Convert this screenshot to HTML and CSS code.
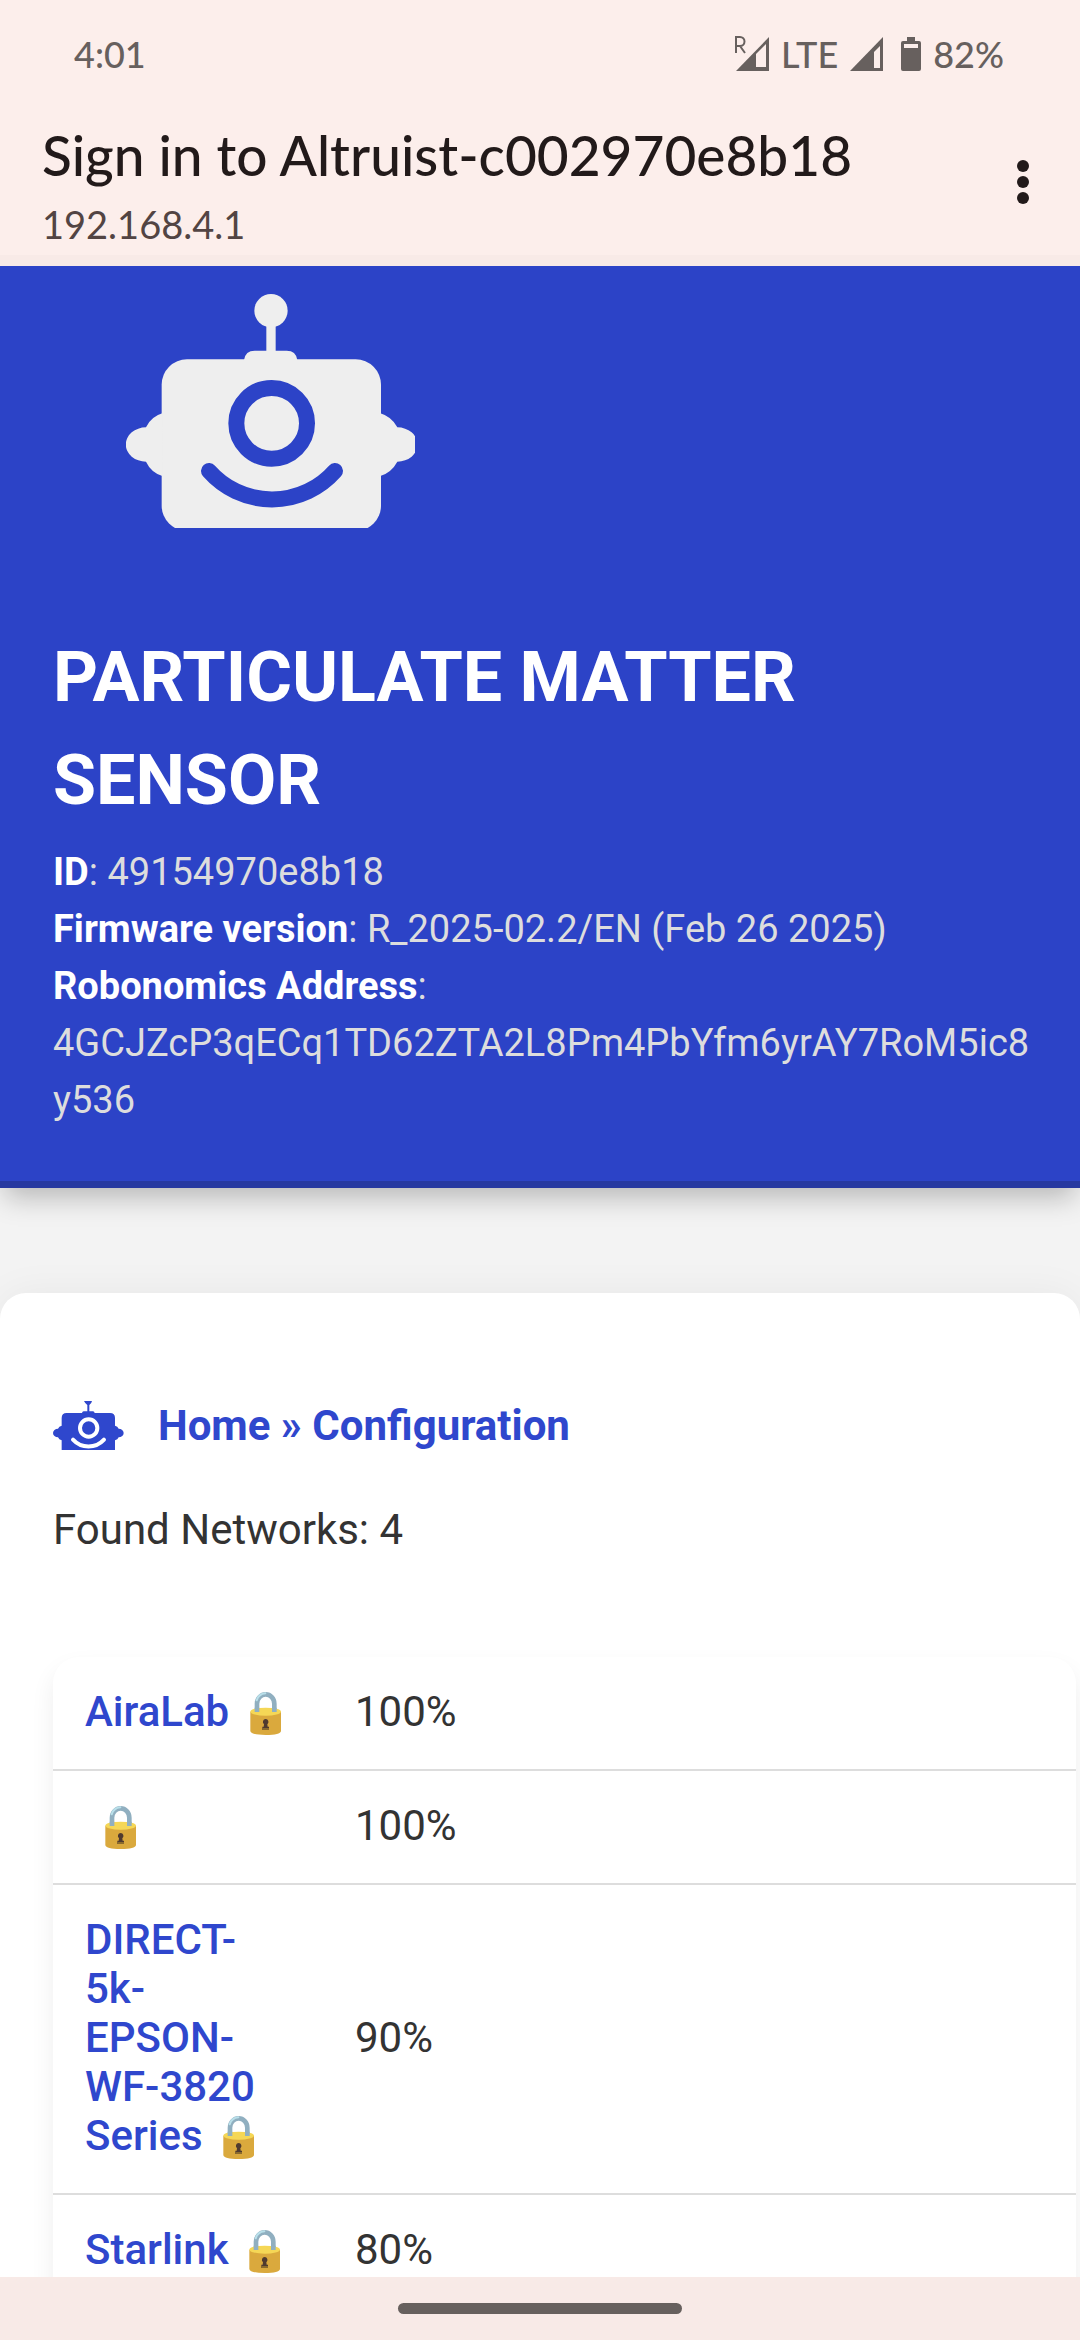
FILE: index.html
```html
<!DOCTYPE html>
<html lang="en">
<head>
<meta charset="utf-8">
<meta name="viewport" content="width=device-width, initial-scale=1">
<title>Sign in to Altruist-c002970e8b18</title>
<link rel="stylesheet" href="styles.css">
</head>
<body>
<svg class="defs" aria-hidden="true">
  <symbol id="lock" viewBox="0 0 93 132">
    <path d="M21 62V38a26 28 0 0 1 52 0v24" fill="none" stroke="#90afc0" stroke-width="14"/>
    <path d="M20 28Q26 9 46 7" fill="none" stroke="#b9e0ea" stroke-width="6" stroke-linecap="round"/>
    <path d="M1 62v58q2 12 46 12t46-12V62z" fill="#daa93d"/>
    <ellipse cx="47" cy="62" rx="46" ry="12" fill="#f5d756"/>
    <path d="M14 50h14v13H14zM66 50h14v13H66z" fill="#90afc0"/>
    <path d="M47 84a9 9 0 0 1 5 16l1 7h4v10H37v-10h4l1-7a9 9 0 0 1 5-16z" fill="#4f3a2f"/>
    <path d="M37 111h20v6H37z" fill="#8a6a2c"/>
  </symbol>
</svg>

<header class="system">
  <div class="status">
    <span class="clock">4:01</span>
    <div class="indicators">
      <svg class="roaming" viewBox="0 0 34 36" aria-hidden="true">
        <path d="M1 35 34 1v34z" fill="#67605e"/><path d="M21 18 31 8v23H21z" fill="#fceeeb"/>
        <path d="M0 0h14v19H0z" fill="#fceeeb"/>
        <path d="M1 17V1h4a4 4 0 0 1 0 9H1M5 10l5 7" fill="none" stroke="#67605e" stroke-width="2"/>
      </svg>
      <span class="network">LTE</span>
      <svg class="signal" viewBox="0 0 33 34" aria-hidden="true">
        <path d="M0 34 33 0v34z" fill="#67605e"/><path d="M24 15 30 9v22h-6z" fill="#fceeeb"/>
      </svg>
      <svg class="battery" viewBox="0 0 20 34" aria-hidden="true">
        <path d="M6 0h8v4h4q2 0 2 2v26q0 2-2 2H2q-2 0-2-2V6q0-2 2-2h4z" fill="#67605e"/><path d="M3 7h14v4H3z" fill="#fceeeb"/>
      </svg>
      <span>82%</span>
    </div>
  </div>
  <div class="toolbar">
    <div class="heading">
      <div class="title">Sign in to Altruist-c002970e8b18</div>
      <div class="host">192.168.4.1</div>
    </div>
    <button class="more" aria-label="More options">
      <svg viewBox="0 0 12 44" aria-hidden="true"><g fill="#221a1a"><circle cx="6" cy="6" r="6"/><circle cx="6" cy="22" r="6"/><circle cx="6" cy="38" r="6"/></g></svg>
    </button>
  </div>
</header>

<div class="page">
  <section class="banner">
    <svg class="robot" viewBox="78 72 867 702" aria-label="Robonomics">
      <g fill="#eee">
        <circle cx="513" cy="122" r="50"/>
        <path d="M499 160h28v90h-28zM432 270q4-28 32-28h96q28 0 32 28z"/>
        <rect x="185" y="268" width="658" height="515" rx="76"/>
        <path d="M187 430Q153 440 138 472A60 51 0 0 0 138 575Q153 607 187 618zM841 430Q875 440 892 472A60 51 0 0 1 892 575Q875 607 841 618z"/>
      </g>
      <g fill="none" stroke="#2c43c7" stroke-width="48" stroke-linecap="round">
        <circle cx="515" cy="460" r="106"/>
        <path d="M327 603A252 252 0 0 0 705 603"/>
      </g>
    </svg>
    <h1>PARTICULATE MATTER SENSOR</h1>
    <p class="info"><b>ID</b>: 49154970e8b18<br>
      <b>Firmware version</b>: R_2025-02.2/EN (Feb 26 2025)<br>
      <b>Robonomics Address</b>:<br>
      <span class="address">4GCJZcP3qECq1TD62ZTA2L8Pm4PbYfm6yrAY7RoM5ic8y536</span></p>
  </section>

  <main class="card">
    <nav class="crumbs">
      <svg class="robot-small" viewBox="159 726 213 147" aria-hidden="true">
        <path d="M252 726h24q-1 7-8 12v19h11q4 1 5 5h46q15 0 15 15v23q8 2 11 9a15 13 0 0 1 0 26q-3 7-11 9v29H185v-29q-8-2-11-9a15 13 0 0 1 0-26q3-7 11-9v-23q0-15 15-15h46q1-4 5-5h11v-19q-7-5-10-12z" fill="#2f47cd"/>
        <g fill="none" stroke="#fff" stroke-width="12" stroke-linecap="round">
          <circle cx="266" cy="807" r="26"/>
          <path d="M219 842A63 63 0 0 0 312 842"/>
        </g>
      </svg>
      <a href="#">Home » Configuration</a>
    </nav>
    <p class="found">Found Networks: 4</p>
    <table class="networks">
      <tr><td class="name"><a href="#">AiraLab</a>&nbsp;<svg class="lock"><use href="#lock"/></svg></td><td>100%</td></tr>
      <tr><td class="name">&nbsp;<svg class="lock"><use href="#lock"/></svg></td><td>100%</td></tr>
      <tr><td class="name"><a href="#">DIRECT-5k-EPSON-WF-3820 Series</a>&nbsp;<svg class="lock"><use href="#lock"/></svg></td><td>90%</td></tr>
      <tr><td class="name"><a href="#">Starlink</a>&nbsp;<svg class="lock"><use href="#lock"/></svg></td><td>80%</td></tr>
    </table>
  </main>
</div>

<footer class="gesture"><div class="handle"></div></footer>
</body>
</html>
```

FILE: styles.css
```css
* { box-sizing: border-box; }

body {
  margin: 0;
  height: 100vh;
  display: flex;
  flex-direction: column;
  overflow: hidden;
  background: #f3f3f3;
  color: #333;
  font: 42px/49px Roboto, sans-serif;
}

.defs {
  display: none;
}

.system {
  flex: none;
  background: #fceeeb;
  border-bottom: 11px solid #f8eae7;
  font-family: "Lato Medium", Lato, sans-serif;
}

.status {
  height: 108px;
  padding: 0 76px 0 74px;
  display: flex;
  align-items: center;
  justify-content: space-between;
  color: #67605e;
  font-size: 36px;
  font-weight: 500;
}

.indicators {
  display: flex;
  align-items: center;
  gap: 12px;
}

.roaming { width: 34px; height: 36px; }
.signal { width: 33px; height: 34px; }
.battery { width: 20px; height: 34px; margin-left: 6px; }

.toolbar {
  height: 147px;
  padding: 0 51px 0 42px;
  display: flex;
  justify-content: space-between;
}

.title {
  margin-top: 12px;
  color: #221a1a;
  font-size: 55px;
  font-weight: 500;
  line-height: 70px;
}

.host {
  color: #524443;
  font-family: Lato, sans-serif;
  font-size: 38px;
  line-height: 68px;
}

.more {
  padding: 0;
  border: 0;
  background: none;
  height: 147px;
}

.more svg {
  display: block;
  width: 12px;
  height: 44px;
}

.page {
  flex: 1;
  min-height: 0;
  overflow: hidden;
}

.banner {
  padding: 28px 48px 52px 53px;
  background: #2c43c7;
  border-bottom: 7px solid #2638a0;
  box-shadow: 0 14px 26px -5px rgba(0, 0, 0, .25);
  color: #ddd;
}

.robot {
  display: block;
  width: 289px;
  height: 234px;
  margin-left: 73px;
}

h1 {
  margin: 98px 0 12px;
  color: #fff;
  font-size: 70px;
  line-height: 103px;
  font-weight: 700;
}

.info {
  margin: 0;
  font-size: 38px;
  line-height: 57px;
}

.info b {
  color: #fff;
}

.address {
  word-break: break-all;
}

.card {
  margin-top: 105px;
  padding: 108px 4px 60px 53px;
  background: #fff;
  border-radius: 26px;
  box-shadow: 0 0 40px rgba(0, 0, 0, .05);
}

.crumbs {
  display: flex;
  align-items: center;
  gap: 34px;
  font-weight: 700;
}

.robot-small {
  width: 71px;
  height: 49px;
}

a {
  color: #2f47cd;
  text-decoration: none;
}

.found {
  margin: 55px 0 0;
}

.networks {
  width: 100%;
  margin-top: 103px;
  table-layout: fixed;
  border-collapse: separate;
  border-spacing: 0;
  background: #fff;
  border-radius: 26px;
  box-shadow: 0 12px 24px rgba(0, 0, 0, .07);
}

.networks td {
  padding: 30px 32px 33px;
  border-bottom: 2px solid #ddd;
}

.networks .name {
  width: 270px;
  font-weight: 500;
}

.lock {
  width: 31px;
  height: 44px;
  margin-left: 10px;
  vertical-align: -9px;
}

.gesture {
  flex: none;
  height: 63px;
  display: flex;
  align-items: center;
  justify-content: center;
  background: #f8eae7;
}

.handle {
  width: 284px;
  height: 11px;
  border-radius: 6px;
  background: #67605e;
}
```
